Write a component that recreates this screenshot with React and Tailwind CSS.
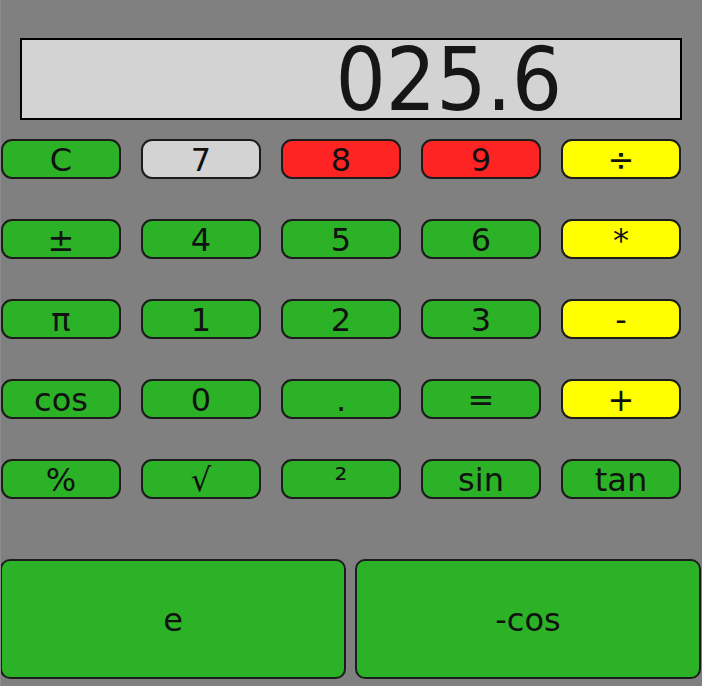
import React from 'react';

const rows = [
  [['C', 'g'], ['7', 'w'], ['8', 'r'], ['9', 'r'], ['÷', 'y']],
  [['±', 'g'], ['4', 'g'], ['5', 'g'], ['6', 'g'], ['*', 'y']],
  [['π', 'g'], ['1', 'g'], ['2', 'g'], ['3', 'g'], ['-', 'y']],
  [['cos', 'g'], ['0', 'g'], ['.', 'g'], ['=', 'g'], ['+', 'y']],
  [['%', 'g'], ['√', 'g'], ['²', 'g'], ['sin', 'g'], ['tan', 'g']],
];

const colors = {
  g: 'bg-[#2cb226]',
  w: 'bg-[#d3d3d3]',
  r: 'bg-[#ff2424]',
  y: 'bg-[#ffff00]',
};

const Key = ({ label, color }) => (
  <button
    className={`${colors[color]} w-[120px] h-[40px] rounded-[11px] border-2 border-[#1c1c1c] text-[32px] leading-none text-[#111] flex items-end justify-center pb-[1px]`}
  >
    {label}
  </button>
);

export default function App() {
  return (
    <div
      className="w-[702px] h-[686px] bg-[#808080] overflow-hidden border-l border-[#8c8c8c]"
      style={{ fontFamily: '"DejaVu Sans", sans-serif' }}
    >
      <div className="pt-[38px] pl-[19px]">
        <div className="w-[662px] h-[82px] bg-[#d3d3d3] border-2 border-black flex items-center justify-end pr-[118px]">
          <span
            className="text-[88px] leading-none text-[#161616] mt-[2px]"
            style={{ fontFamily: '"DejaVu Sans Condensed", "DejaVu Sans", sans-serif' }}
          >
            025.6
          </span>
        </div>
      </div>
      <div className="pt-[19px] flex flex-col gap-[40px]">
        {rows.map((row, i) => (
          <div key={i} className="flex gap-[20px]">
            {row.map(([label, color]) => (
              <Key key={label} label={label} color={color} />
            ))}
          </div>
        ))}
      </div>
      <div className="mt-[60px] flex gap-[9px] -ml-px">
        <button className="w-[346px] h-[120px] bg-[#2cb226] border-2 border-[#1c1c1c] rounded-[10px] text-[32px] text-[#111] pt-[2px]">
          e
        </button>
        <button className="w-[346px] h-[120px] bg-[#2cb226] border-2 border-[#1c1c1c] rounded-[10px] text-[32px] text-[#111] pt-[2px]">
          -cos
        </button>
      </div>
    </div>
  );
}
